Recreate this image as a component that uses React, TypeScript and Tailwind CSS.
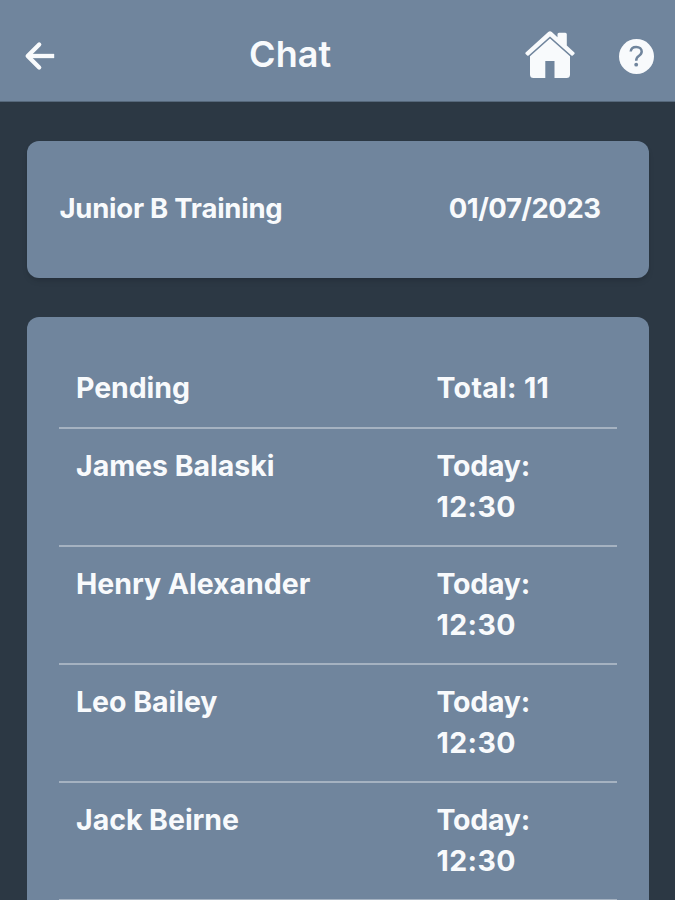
import React from "react";

const people = ["James Balaski", "Henry Alexander", "Leo Bailey", "Jack Beirne"];

export default function App() {
  return (
    <div className="h-[900px] w-[675px] overflow-hidden bg-[#2c3844] font-['Inter',sans-serif] font-bold text-[#f8fafc]">
      <header className="flex h-[102px] items-center border-b border-[#56687b] bg-[#70859d] pt-[11px]">
        <svg className="ml-[24px] h-[32px] w-[32px]" viewBox="0 0 32 32" fill="none" stroke="currentColor" strokeWidth="4.3">
          <path d="M30.2 16H4" />
          <path d="M15.2 4.5L3.7 16L15.2 27.5" strokeLinecap="round" strokeLinejoin="round" />
        </svg>
        <h1 className="mb-[5px] ml-[193px] w-[82px] whitespace-nowrap text-[36px] font-semibold leading-none tracking-[0.1px]">Chat</h1>
        <svg className="mb-[2px] ml-[194px] h-[50px] w-[50px]" viewBox="0 0 50 50" fill="currentColor">
          <path d="M23.2 2Q25 .5 26.8 2L32.5 7.2V4.2Q32.5 2.7 34 2.7H40.3Q41.8 2.7 41.8 4.2V15.5L49.4 22.5Q50 23.2 49.4 23.9L47.8 25.5Q47.1 26.2 46.4 25.5L25 6.5L3.6 25.5Q2.9 26.2 2.2 25.5L.6 23.9Q0 23.2.6 22.5Z" />
          <path d="M25 8.5L45 26.3V44.5Q45 48 41.5 48H29.5V31H20.3V48H8.5Q5 48 5 44.5V26.3Z" />
        </svg>
        <svg className="ml-[44px] size-[35px]" viewBox="0 0 35 35" fill="none">
          <circle cx="17.5" cy="17.5" r="17.5" fill="currentColor" />
          <path d="M11.7 12.5C12 9.5 14.2 7.9 17.2 7.9C20.5 7.9 22.7 9.8 22.7 12.6C22.7 14.7 21.6 15.9 19.8 17C17.9 18.2 17.2 19.1 17.2 21.7" stroke="#70859d" strokeWidth="2.5" />
          <circle cx="17.2" cy="25.7" r="1.9" fill="#70859d" />
        </svg>
      </header>
      <main className="flex flex-col gap-[39px] px-[26.5px] pt-[39px]">
        <section className="flex h-[137px] w-[622.5px] items-center justify-between rounded-[12px] bg-[#70859d] pb-[2px] pl-[33px] pr-[48.5px] text-[27.5px] shadow-md">
          <h2 className="tracking-[-0.25px]">Junior B Training</h2>
          <time className="tracking-[-0.5px]">01/07/2023</time>
        </section>
        <section className="h-[620px] w-[622.5px] rounded-[12px] bg-[#70859d] px-[32.5px] pt-[44px] text-[28.5px] leading-[41px]">
          <div className="flex h-[68px] border-b-2 border-[#a5b2c1] pl-[17px] pt-[6px]">
            <span className="w-[360.5px] tracking-[-0.08px]">Pending</span><span className="tracking-[0.3px]">Total: 11</span>
          </div>
          {people.map((name) => (
            <div key={name} className="flex h-[118px] border-b-2 border-[#a5b2c1] pl-[17px] pt-[16px]">
              <span className="w-[360.5px] tracking-[-0.03px]">{name}</span>
              <span>
                <span className="block tracking-[-0.25px]">Today:</span>
                <span className="block tracking-[0.4px]">12:30</span>
              </span>
            </div>
          ))}
        </section>
      </main>
    </div>
  );
}
